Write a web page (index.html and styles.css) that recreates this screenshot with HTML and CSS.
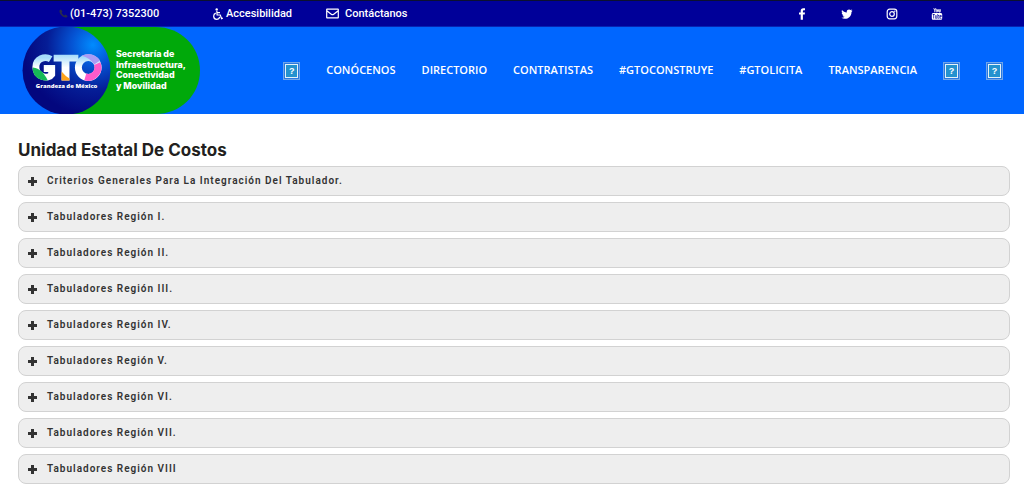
FILE: index.html
```
<!DOCTYPE html>
<html lang="es">
<head>
<meta charset="utf-8">
<meta name="viewport" content="width=device-width, initial-scale=1">
<title>Unidad Estatal De Costos</title>
<link rel="stylesheet" href="styles.css">
</head>
<body>
<div class="topbar">
  <div class="contact">
    <a class="contact-link phone" href="#"><svg class="icon-phone" viewBox="0 0 10 10"><path d="M2.2.5 3.9 2.8 2.9 4.1C3.5 5.4 4.5 6.5 5.9 7.1L7.2 6.1 9.5 7.7C9.3 9 8.4 9.6 7.4 9.5 3.8 9 .9 6.1.5 2.6.4 1.6 1 .7 2.2.5Z"/></svg>(01-473) 7352300</a>
    <a class="contact-link access" href="#"><svg class="icon-access" viewBox="0 0 10 12"><circle cx="3.7" cy="1.4" r="1.2"/><path class="line" d="M3.8 2.8 4.1 7H7.3L8.6 10.6 9.8 10.1M4 4.7H7M2.8 5.1C-.3 6.2.1 11.2 3.6 11.3 5.3 11.3 6.4 10.2 6.7 8.9"/></svg>Accesibilidad</a>
    <a class="contact-link mail" href="#"><svg class="icon-mail" viewBox="0 0 13 11"><path class="line" d="M1 1.1H12Q12.3 1.1 12.3 1.4V9.6Q12.3 9.9 12 9.900H1Q.7 9.9.7 9.6V1.4Q.7 1.1 1 1.1ZM.8 2.7 5.6 6.4Q6.5 7 7.4 6.4L12.2 2.7"/></svg>Contáctanos</a>
  </div>
  <div class="social">
    <a href="#" aria-label="Facebook"><svg viewBox="0 0 12 12"><path d="M9 .3V2.2H7.8Q6.9 2.2 6.9 3.1V4.4H9L8.7 6.4H6.9V11.7H4.7V6.4H3V4.4H4.7V2.8Q4.7.2 7.3.2 8.4.2 9 .3Z"/></svg></a>
    <a href="#" aria-label="Twitter"><svg viewBox="0 0 12 12"><path d="M11.6 2.8 10.5 3.9C10.6 8 7.4 10.8 3.9 10.8 2.6 10.8 1.4 10.4.4 9.8 1.7 9.9 2.8 9.6 3.7 8.8 2.7 8.8 1.9 8.1 1.6 7.2H2.6C1.4 6.9.7 5.9.7 4.8L1.7 5.1C.7 4.3.4 3.1 1 1.9 2.2 3.4 3.9 4.3 5.8 4.4 5.4 2.6 6.6 1.4 8.1 1.4 8.7 1.4 9.3 1.7 9.8 2.1L11.2 1.6 10.3 2.9Z"/></svg></a>
    <a href="#" aria-label="Instagram"><svg viewBox="0 0 12 12"><rect class="line" x="1.2" y="1.2" width="9.6" height="9.6" rx="2.5"/><circle class="line" cx="6" cy="6" r="2.3"/><circle cx="8.8" cy="3.2" r=".7"/></svg></a>
    <a href="#" aria-label="YouTube"><svg viewBox="0 0 12 12"><path class="thin" d="M2.8.2 3.8 2.5V4.3M4.8.2 3.8 2.5M5.3 1.9Q5.3 1.4 5.9 1.4T6.5 1.9V3.5Q6.5 4.1 5.9 4.1T5.3 3.5ZM7.6 1.3V3.6Q8.1 4.4 9 3.6V1.3 4.3"/><path fill-rule="evenodd" d="M2 5H10Q11.2 5 11.2 6.5V10.2Q11.2 11.7 10 11.7H2Q.8 11.7.8 10.2V6.5Q.8 5 2 5ZM1.7 6.1V6.8H2.4V10.5H3.1V6.8H3.8V6.1ZM4.2 7.3V10.5H6V7.3H5.5V9.9H4.8V7.3ZM6.5 6.1V10.5H8.3V7.3H7.1V6.1ZM7.1 7.9H7.7V9.9H7.1ZM8.8 7.3V10.5H10.5V9.9H9.4V9H10.5V7.3ZM9.4 7.9H9.9V8.4H9.4Z"/></svg></a>
  </div>
</div>
<header class="header">
  <a class="brand" href="#" aria-label="Inicio">
    <svg class="logo" viewBox="0 0 180 88">
      <defs>
        <radialGradient id="globe" cx=".8" cy=".21" r=".8"><stop offset="0" stop-color="#008cff"/><stop offset=".3" stop-color="#0554d4"/><stop offset=".65" stop-color="#051d96"/><stop offset="1" stop-color="#03077e"/></radialGradient>
        <linearGradient id="shine" x1="0" y1="0" x2="0" y2="1"><stop offset="0" stop-color="#a5dcfa"/><stop offset=".5" stop-color="#fff"/></linearGradient>
      </defs>
      <path fill="#00a90a" d="M45 0H135C160 0 180 19 180 44S160 88 135 88H45Z"/>
      <circle cx="45" cy="44" r="44.500" fill="url(#globe)"/>
      <path fill="none" stroke="url(#shine)" stroke-width="7" d="M29 32.500C23 29 14 32 14 40.500 14 51 27 53 30 48V42H22"/>
      <path fill="#16b957" d="M11 41C18 42 22 46 26 54 18 55 10 50 11 41Z"/>
      <path fill="url(#shine)" d="M32 28H57V35H48V54H40V35H32Z"/>
      <path fill="#ffa21a" d="M40 45Q44 50 48 52V54H40Z"/>
      <circle cx="67" cy="41" r="10" fill="none" stroke="url(#shine)" stroke-width="7"/>
      <path fill="none" stroke="#ff5bcb" stroke-width="7" d="M76 37A10 10 0 0 1 64 50.500"/>
      <path fill="#a99cf5" d="M60 29Q72 24 79 34L73 38Q69 31 60 29Z"/>
      <text class="motto" x="14" y="62">Grandeza de México</text>
      <text class="agency"><tspan x="95" y="30">Secretaría de</tspan><tspan x="95" y="41">Infraestructura,</tspan><tspan x="95" y="52">Conectividad</tspan><tspan x="95" y="63">y Movilidad</tspan></text>
    </svg>
  </a>
  <nav class="nav">
    <a class="emblem" href="#"><span>?</span></a>
    <a class="item" href="#">CONÓCENOS</a>
    <a class="item" href="#">DIRECTORIO</a>
    <a class="item" href="#">CONTRATISTAS</a>
    <a class="item" href="#">#GTOCONSTRUYE</a>
    <a class="item" href="#">#GTOLICITA</a>
    <a class="item" href="#">TRANSPARENCIA</a>
    <a class="emblem" href="#"><span>?</span></a>
    <a class="emblem" href="#"><span>?</span></a>
  </nav>
</header>
<main class="main">
  <h1>Unidad Estatal De Costos</h1>
  <div class="accordion">
    <button type="button" aria-expanded="false"><i class="plus"></i>Criterios Generales Para La Integración Del Tabulador.</button>
    <button type="button" aria-expanded="false"><i class="plus"></i>Tabuladores Región I.</button>
    <button type="button" aria-expanded="false"><i class="plus"></i>Tabuladores Región II.</button>
    <button type="button" aria-expanded="false"><i class="plus"></i>Tabuladores Región III.</button>
    <button type="button" aria-expanded="false"><i class="plus"></i>Tabuladores Región IV.</button>
    <button type="button" aria-expanded="false"><i class="plus"></i>Tabuladores Región V.</button>
    <button type="button" aria-expanded="false"><i class="plus"></i>Tabuladores Región VI.</button>
    <button type="button" aria-expanded="false"><i class="plus"></i>Tabuladores Región VII.</button>
    <button type="button" aria-expanded="false"><i class="plus"></i>Tabuladores Región VIII</button>
  </div>
</main>
</body>
</html>
```
FILE: styles.css
```
* { box-sizing: border-box; }
body {
  margin: 0;
  background: #fff;
  color: #231f20;
  font-family: Inter, "Open Sans", sans-serif;
}
a { color: inherit; text-decoration: none; }
svg { display: block; flex: none; fill: currentColor; }
.line { fill: none; stroke: currentColor; stroke-width: 1.2; }
.thin { fill: none; stroke: currentColor; stroke-width: .9; }

.topbar {
  display: flex;
  justify-content: space-between;
  align-items: center;
  height: 27px;
  padding: 0 81px 0 59px;
  border-top: 1px solid #0b1030;
  border-bottom: 1px solid #0624b4;
  background: #000099;
  color: #fff;
}
.contact { display: flex; font-family: Roboto, sans-serif; font-size: 11px; line-height: 16px; font-weight: 500; }
.contact-link { display: flex; align-items: center; white-space: nowrap; }
.phone { width: 154px; gap: 2px; }
.access { width: 113px; gap: 3px; }
.mail { gap: 6px; }
.icon-phone { width: 9px; height: 9px; color: #282b4c; }
.icon-access { width: 10px; height: 12px; }
.icon-mail { width: 13px; height: 11px; }
.social { display: flex; gap: 33px; }
.social svg { width: 12px; height: 12px; }

.header {
  display: flex;
  justify-content: space-between;
  align-items: center;
  padding: 0 21px;
  background: #0066ff;
  color: #fff;
}
.logo { width: 180px; height: 87px; }
.motto { font: 800 6px "Open Sans", sans-serif; fill: #fff; }
.agency { font: 800 9px Inter, sans-serif; fill: #fff; }
.nav {
  display: flex;
  align-items: center;
  gap: 26px;
  font: 600 11px/16px "Open Sans", sans-serif;
  white-space: nowrap;
}
.item { padding-bottom: 2px; }
.emblem { padding: 1px; border: 1px solid #6fa4ea; background: #2a79e0; }
.emblem span {
  display: block;
  width: 13px;
  height: 14px;
  border: 1px solid #e4f2fa;
  background: #2492cf;
  font: bold 9px/12px "Liberation Sans", sans-serif;
  text-align: center;
}

.main { padding: 26px 14px 9px 18px; }
h1 { margin: 0 0 6px; font-size: 17px; line-height: 20px; font-weight: 700; }
.accordion { display: grid; gap: 6px; }
.accordion button {
  display: flex;
  align-items: center;
  gap: 10px;
  height: 30px;
  padding: 0 9px;
  border: 1px solid #d2d2d2;
  border-radius: 8px;
  background: #eee;
  color: #333;
  font: 600 10px/16px Roboto, sans-serif;
  letter-spacing: 1px;
  text-align: left;
}
.plus {
  width: 9px;
  height: 9px;
  background: linear-gradient(#333, #333) center / 9px 3px no-repeat, linear-gradient(#333, #333) center / 3px 9px no-repeat;
}
```
